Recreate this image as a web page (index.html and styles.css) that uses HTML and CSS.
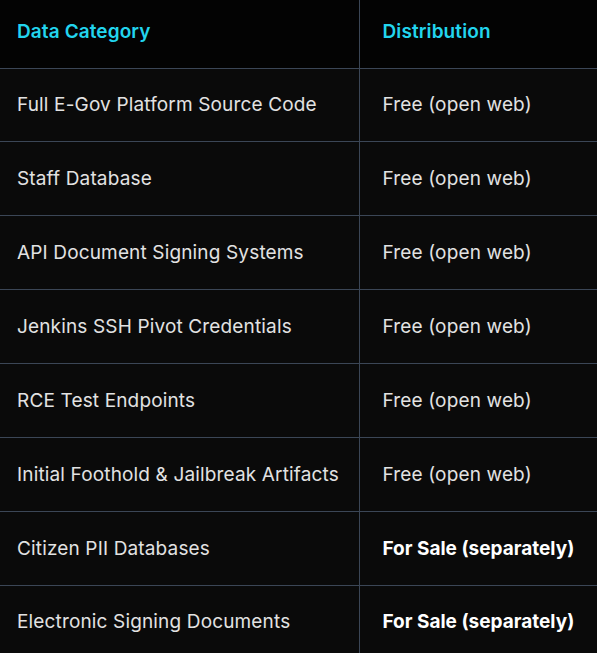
FILE: index.html
```html
<!DOCTYPE html>
<html>
<head>
<meta charset="utf-8">
<link rel="stylesheet" href="styles.css">
</head>
<body>
<table class="data-table">
  <thead>
    <tr><th class="col-cat">Data Category</th><th class="col-dist">Distribution</th></tr>
  </thead>
  <tbody>
    <tr><td class="col-cat">Full E-Gov Platform Source Code</td><td class="col-dist">Free (open web)</td></tr>
    <tr><td class="col-cat">Staff Database</td><td class="col-dist">Free (open web)</td></tr>
    <tr><td class="col-cat">API Document Signing Systems</td><td class="col-dist">Free (open web)</td></tr>
    <tr><td class="col-cat">Jenkins SSH Pivot Credentials</td><td class="col-dist">Free (open web)</td></tr>
    <tr><td class="col-cat">RCE Test Endpoints</td><td class="col-dist">Free (open web)</td></tr>
    <tr><td class="col-cat">Initial Foothold &amp; Jailbreak Artifacts</td><td class="col-dist">Free (open web)</td></tr>
    <tr><td class="col-cat">Citizen PII Databases</td><td class="col-dist"><strong class="sale">For Sale (separately)</strong></td></tr>
    <tr><td class="col-cat">Electronic Signing Documents</td><td class="col-dist"><strong class="sale">For Sale (separately)</strong></td></tr>
  </tbody>
</table>
</body>
</html>
```
FILE: styles.css
```css
html, body {
  margin: 0;
  padding: 0;
  background: #0a0a0a;
}
body {
  font-family: Inter, "Noto Sans", sans-serif;
  overflow: hidden;
}
.data-table {
  border-collapse: collapse;
  width: 597px;
  table-layout: fixed;
}
.data-table th, .data-table td {
  text-align: left;
  font-size: 19px;
  line-height: 24px;
  padding: 0;
  box-sizing: border-box;
}
.data-table th {
  background: #030303;
  color: #22d5ee;
  font-weight: 600;
  height: 68px;
  padding-bottom: 3px;
  vertical-align: middle;
  border-bottom: 1px solid #3b4656;
  letter-spacing: 0.1px;
}
.data-table td {
  background: #0a0a0a;
  color: #e2e2e2;
  font-weight: 400;
  height: 73.86px;
  padding-top: 1px;
  border-bottom: 1px solid #3b4656;
  letter-spacing: 0.15px;
}
.col-cat {
  width: 359px;
  padding-left: 17px !important;
  border-right: 1px solid #3b4656;
}
.col-dist {
  padding-left: 23px !important;
}
.sale {
  color: #ffffff;
  font-weight: 700;
  letter-spacing: 0;
}
```
